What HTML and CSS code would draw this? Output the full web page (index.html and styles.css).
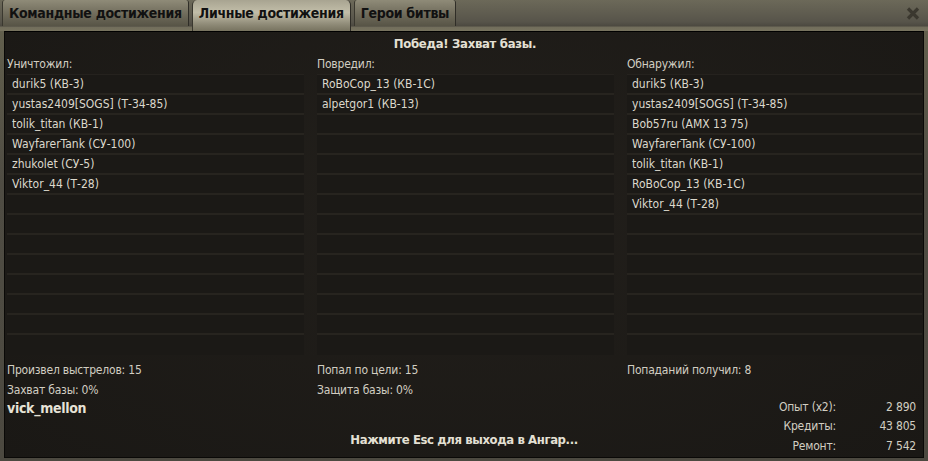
FILE: index.html
```html
<!DOCTYPE html>
<html lang="ru">
	<head>
		<title>Результаты боя</title>
		<meta charset="utf-8" name="viewport" content="width=device-width, initial-scale=1">
		<link rel="stylesheet" href="styles.css">
	</head>
	<body>
		<div class="window">
			<div class="tabbar">
				<button class="tablink">Командные достижения</button>
				<button class="tablink active">Личные достижения</button>
				<button class="tablink">Герои битвы</button>
				<span class="spacer"></span>
				<button class="close" title="Закрыть">
					<svg width="14" height="13" viewBox="0 0 14 13"><path d="M2 1.5 L12 11.5 M12 1.5 L2 11.5" stroke="#3b382f" stroke-width="3.2"/></svg>
				</button>
			</div>
			<div class="panel">
				<div class="result">Победа! Захват базы.</div>
				<div class="columns">
					<div class="col">
						<div class="label">Уничтожил:</div>
						<ul class="list">
							<li>durik5 (КВ-3)</li>
							<li>yustas2409[SOGS] (Т-34-85)</li>
							<li>tolik_titan (КВ-1)</li>
							<li>WayfarerTank (СУ-100)</li>
							<li>zhukolet (СУ-5)</li>
							<li>Viktor_44 (Т-28)</li>
							<li></li><li></li><li></li><li></li><li></li><li></li><li></li><li></li>
						</ul>
					</div>
					<div class="col">
						<div class="label">Повредил:</div>
						<ul class="list">
							<li>RoBoCop_13 (КВ-1С)</li>
							<li>alpetgor1 (КВ-13)</li>
							<li></li><li></li><li></li><li></li><li></li><li></li><li></li><li></li><li></li><li></li><li></li><li></li>
						</ul>
					</div>
					<div class="col last">
						<div class="label">Обнаружил:</div>
						<ul class="list">
							<li>durik5 (КВ-3)</li>
							<li>yustas2409[SOGS] (Т-34-85)</li>
							<li>Bob57ru (AMX 13 75)</li>
							<li>WayfarerTank (СУ-100)</li>
							<li>tolik_titan (КВ-1)</li>
							<li>RoBoCop_13 (КВ-1С)</li>
							<li>Viktor_44 (Т-28)</li>
							<li></li><li></li><li></li><li></li><li></li><li></li><li></li>
						</ul>
					</div>
				</div>
				<div class="footer">
					<div class="stat s1">Произвел выстрелов: 15</div>
					<div class="stat s2">Захват базы: 0%</div>
					<div class="player">vick_mellon</div>
					<div class="stat s4">Попал по цели: 15</div>
					<div class="stat s5">Защита базы: 0%</div>
					<div class="stat s6">Попаданий получил: 8</div>
					<div class="rewards">
						<span class="key">Опыт (x2):</span><span class="val">2 890</span>
						<span class="key">Кредиты:</span><span class="val">43 805</span>
						<span class="key">Ремонт:</span><span class="val">7 542</span>
					</div>
					<div class="esc">Нажмите Esc для выхода в Ангар...</div>
				</div>
			</div>
		</div>
	</body>
</html>
```

FILE: styles.css
```css
* {box-sizing: border-box}

body, html {
	height: 100%;
	margin: 0;
	background-color: #54514a;
	font-family: "DejaVu Sans Condensed", "Liberation Sans", sans-serif;
}

/* Outer window frame */
.window {
	display: flex;
	flex-direction: column;
	width: 928px;
	height: 461px;
	background: linear-gradient(#66634f, #4f4c43 40%, #4c4940);
}

/* Tab strip along the top */
.tabbar {
	display: flex;
	align-items: flex-start;
	height: 31px;
	padding-left: 2px;
	gap: 3px;
	background: linear-gradient(#6c6959, #57544a 70%, #4b483f 85%, #716d5b 86%, #77735f);
}
.tablink {
	background: linear-gradient(#8f8b78, #6f6b5b 55%, #575446);
	color: #111;
	border: none;
	border-right: 1px solid #2f2d27;
	border-left: 1px solid #3a382f;
	border-radius: 3px 3px 0 0;
	outline: none;
	cursor: pointer;
	height: 26px;
	padding: 0 6px;
	font-family: inherit;
	font-weight: bold;
	font-size: 14px;
	letter-spacing: -0.3px;
	line-height: 26px;
}
.tablink.active {
	background: linear-gradient(#a8a491, #c2bea9 40%, #8d8976 80%, #77735f);
	height: 31px;
	line-height: 27px;
	padding: 0 6px 4px;
	border-radius: 5px 5px 0 0;
}
.spacer {flex: 1}
.close {
	background: none;
	border: none;
	height: 26px;
	padding: 0 8px 0 0;
	display: flex;
	align-items: center;
	cursor: pointer;
}

/* Dark content panel */
.panel {
	flex: 1;
	margin: 0 4px 4px;
	border: 1px solid #0a0907;
	border-top-color: #000;
	background: radial-gradient(ellipse at 50% 40%, #221f1b, #1a1815);
	color: #cfcbbf;
	padding: 0 0 0 2px;
	display: flex;
	flex-direction: column;
}
.result {
	text-align: center;
	font-weight: bold;
	font-size: 13px;
	letter-spacing: -0.3px;
	color: #e4e0d4;
	height: 21px;
	line-height: 21px;
	margin-top: 1px;
	margin-bottom: 1px;
}

.columns {
	display: grid;
	grid-template-columns: 310px 310px 1fr;
}
.label {
	font-size: 12px;
	letter-spacing: -0.2px;
	height: 19px;
	line-height: 19px;
	color: #d2cec2;
}
.list {
	list-style: none;
	margin: 0;
	padding: 0;
	width: 297px;
	background-color: #25221e;
	padding-top: 1px;
}
.col.last .list {width: auto; margin-right: 1px}
.list li {
	height: 20px;
	line-height: 19px;
	background-color: #1b1916;
	border-bottom: 2px solid #27241f;
	padding-left: 5px;
	font-size: 12px;
	color: #dcd8cc;
	white-space: nowrap;
}
.list li:last-child {border-bottom: none}

/* Stats under the lists */
.footer {
	display: grid;
	grid-template-columns: 310px 310px 1fr;
	grid-template-rows: 20px 19px 19px 20px 19px;
	margin-top: 5px;
	font-size: 12px;
	letter-spacing: -0.2px;
	color: #d2cec2;
}
.stat {line-height: 20px}
.s1 {grid-column: 1; grid-row: 1}
.s2 {grid-column: 1; grid-row: 2}
.s4 {grid-column: 2; grid-row: 1}
.s5 {grid-column: 2; grid-row: 2}
.s6 {grid-column: 3; grid-row: 1}
.player {
	grid-column: 1;
	grid-row: 3;
	font-weight: bold;
	font-size: 14px;
	letter-spacing: -0.3px;
	color: #e6e2d6;
	line-height: 19px;
}
.rewards {
	grid-column: 3;
	grid-row: 3 / 6;
	justify-self: end;
	display: grid;
	grid-template-columns: auto 80px;
	grid-auto-rows: 19.5px;
	align-items: center;
	margin-right: 7px;
	margin-top: -2px;
	text-align: right;
}
.esc {
	grid-column: 1 / -1;
	grid-row: 5;
	justify-self: center;
	align-self: start;
	margin-top: -6px;
	font-weight: bold;
	font-size: 13px;
	letter-spacing: -0.4px;
	color: #e4e0d4;
	margin-left: -2px;
}
```
